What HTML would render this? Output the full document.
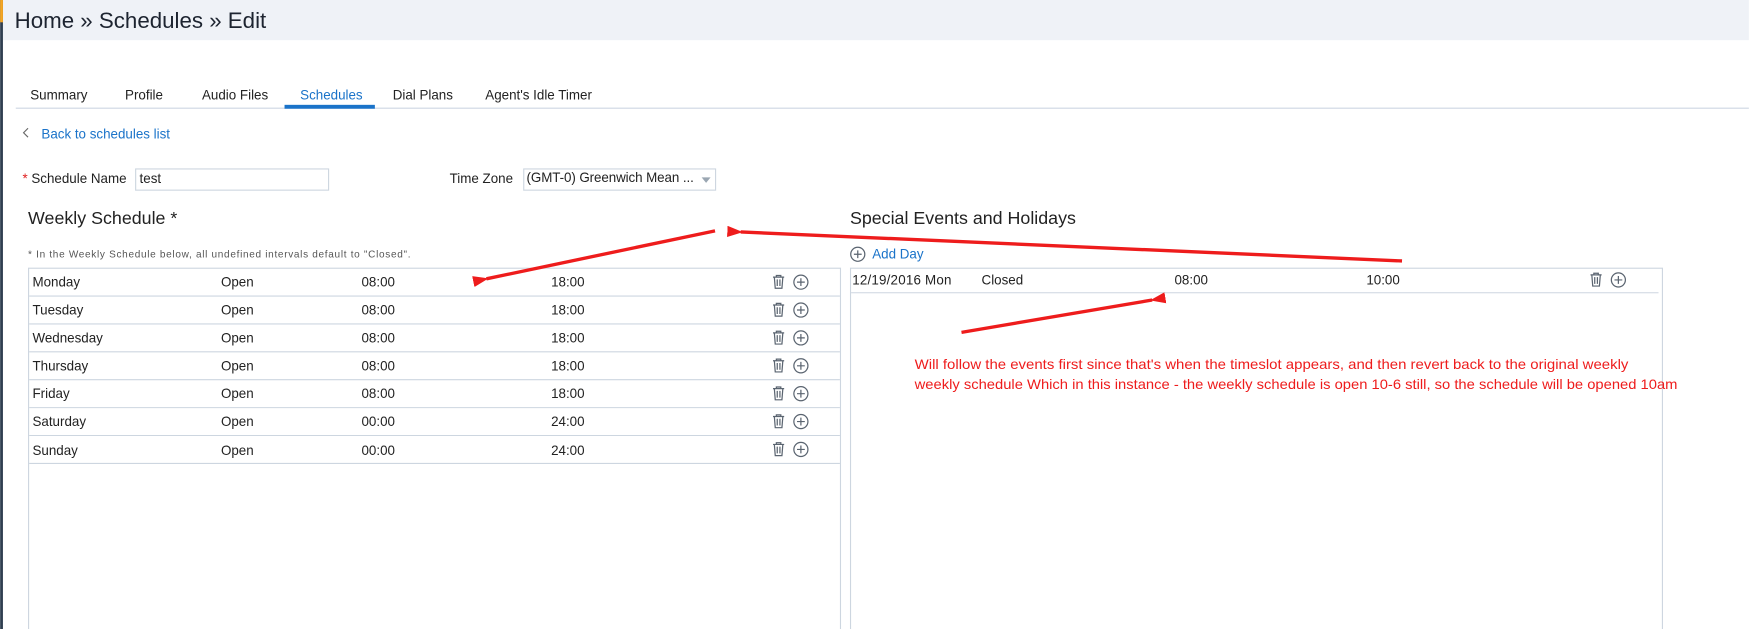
<!DOCTYPE html>
<html><head><meta charset="utf-8"><style>
html,body{margin:0;padding:0;background:#fff;overflow:hidden}
svg{display:block}
text{font-family:"Liberation Sans",sans-serif}
</style></head><body>
<svg width="1749" height="629" viewBox="0 0 1568 564" xmlns="http://www.w3.org/2000/svg">
<defs>
<g id="tr" fill="none" stroke="#5a6470" stroke-width="1.1">
<path d="M-5,-4.5h10M-2,-4.5v-1.5h4v1.5M-3.8,-4.5l0.8,10h6l0.8,-10M-1.2,-2.5v6M1.2,-2.5v6"/>
</g>
<g id="pl" fill="none" stroke="#5a6470" stroke-width="1.1">
<circle r="6.3"/><path d="M-3.5,0h7M0,-3.5v7"/>
</g>
<marker id="ah" markerWidth="14" markerHeight="10" refX="2" refY="5" orient="auto" markerUnits="userSpaceOnUse">
<path d="M14,0 L0,5 L14,10 Z" fill="#ee1c1c"/>
</marker>
</defs>
<rect width="1568" height="36" fill="#eff2f7"/>
<rect x="0" y="0" width="2.5" height="564" fill="#2f3e50"/>
<rect x="0" y="0" width="2.5" height="20" fill="#f5a623"/>
<text x="13" y="25" font-size="20" fill="#1d2430">Home » Schedules » Edit</text>

<g font-size="12" fill="#222">
<text x="27" y="89">Summary</text>
<text x="112" y="89">Profile</text>
<text x="181" y="89">Audio Files</text>
<text x="269" y="89" fill="#1a73c9">Schedules</text>
<text x="352" y="89">Dial Plans</text>
<text x="435" y="89">Agent's Idle Timer</text>
</g>
<rect x="14" y="96.5" width="1554" height="1" fill="#ccd6e2"/>
<rect x="255" y="94" width="81" height="3.5" fill="#1a73c9"/>

<path d="M25,115 l-4,4 l4,4" fill="none" stroke="#666" stroke-width="1"/>
<text x="37" y="124" font-size="12" fill="#1a73c9">Back to schedules list</text>

<text x="20" y="164" font-size="12" fill="#e02020">*</text>
<text x="28" y="164" font-size="12" fill="#222">Schedule Name</text>
<rect x="121.5" y="151.5" width="173" height="19" fill="#fff" stroke="#cdd6e0"/>
<text x="125" y="164" font-size="12" fill="#222">test</text>
<text x="403" y="164" font-size="12" fill="#222">Time Zone</text>
<rect x="469.5" y="151.5" width="172" height="19" fill="#fff" stroke="#cdd6e0"/>
<text x="472" y="163" font-size="12" fill="#222" textLength="150">(GMT-0) Greenwich Mean ...</text>
<path d="M629,159h8l-4,5z" fill="#9aa6b2"/>

<text x="25" y="201" font-size="16" fill="#222">Weekly Schedule *</text>
<text x="762" y="201" font-size="16" fill="#222">Special Events and Holidays</text>
<text x="25" y="231" font-size="9" fill="#555" textLength="343">* In the Weekly Schedule below, all undefined intervals default to "Closed".</text>

<g fill="none" stroke="#cdd6e0" stroke-width="1">
<rect x="25.5" y="240.5" width="728" height="330"/>
<path d="M26,265.5h727M26,290.5h727M26,315.5h727M26,340.5h727M26,365.5h727M26,390.5h727M26,415.5h727"/>
<rect x="762.5" y="240.5" width="728" height="330"/>
<path d="M763,262.5h724"/>
</g>
<g font-size="12" fill="#222">
<text x="29" y="257">Monday</text><text x="198" y="257">Open</text><text x="324" y="257">08:00</text><text x="494" y="257">18:00</text>
<text x="29" y="282">Tuesday</text><text x="198" y="282">Open</text><text x="324" y="282">08:00</text><text x="494" y="282">18:00</text>
<text x="29" y="307">Wednesday</text><text x="198" y="307">Open</text><text x="324" y="307">08:00</text><text x="494" y="307">18:00</text>
<text x="29" y="332">Thursday</text><text x="198" y="332">Open</text><text x="324" y="332">08:00</text><text x="494" y="332">18:00</text>
<text x="29" y="357">Friday</text><text x="198" y="357">Open</text><text x="324" y="357">08:00</text><text x="494" y="357">18:00</text>
<text x="29" y="382">Saturday</text><text x="198" y="382">Open</text><text x="324" y="382">00:00</text><text x="494" y="382">24:00</text>
<text x="29" y="408">Sunday</text><text x="198" y="408">Open</text><text x="324" y="408">00:00</text><text x="494" y="408">24:00</text>
<text x="764" y="255" textLength="89">12/19/2016 Mon</text><text x="880" y="255">Closed</text><text x="1053" y="255">08:00</text><text x="1225" y="255">10:00</text>
</g>
<use href="#tr" x="698" y="253"/><use href="#pl" x="718" y="253"/>
<use href="#tr" x="698" y="278"/><use href="#pl" x="718" y="278"/>
<use href="#tr" x="698" y="303"/><use href="#pl" x="718" y="303"/>
<use href="#tr" x="698" y="328"/><use href="#pl" x="718" y="328"/>
<use href="#tr" x="698" y="353"/><use href="#pl" x="718" y="353"/>
<use href="#tr" x="698" y="378"/><use href="#pl" x="718" y="378"/>
<use href="#tr" x="698" y="403"/><use href="#pl" x="718" y="403"/>
<use href="#tr" x="1431" y="251"/><use href="#pl" x="1451" y="251"/>
<use href="#pl" x="769" y="228"/>
<text x="782" y="232" font-size="12" fill="#1a73c9">Add Day</text>

<g stroke="#ee1c1c" stroke-width="3" fill="none">
<line x1="641" y1="207" x2="436" y2="250" marker-end="url(#ah)"/>
<line x1="1257" y1="234" x2="664" y2="208" marker-end="url(#ah)"/>
<line x1="862" y1="298" x2="1033" y2="269" marker-end="url(#ah)"/>
</g>
<text x="820" y="331" font-size="12" fill="#ee1c1c" textLength="640" lengthAdjust="spacingAndGlyphs">Will follow the events first since that's when the timeslot appears, and then revert back to the original weekly</text>
<text x="820" y="349" font-size="12" fill="#ee1c1c" textLength="684" lengthAdjust="spacingAndGlyphs">weekly schedule Which in this instance - the weekly schedule is open 10-6 still, so the schedule will be opened 10am</text>
</svg>
</body></html>
